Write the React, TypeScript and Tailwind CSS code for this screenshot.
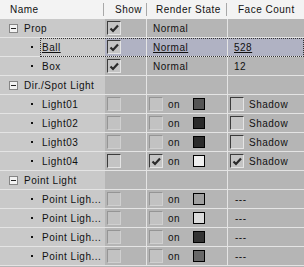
import React from 'react'

type Light = {
  name: string
  show: 'off' | 'disabled' | 'on'
  on: boolean
  onEnabled: boolean
  color: string
  shadow?: boolean
}

const font = { fontFamily: '"Liberation Sans", Arial, sans-serif' }

function CheckBox({ checked, enabled }: { checked?: boolean; enabled?: boolean }) {
  const edge = enabled
    ? 'border-t-[#3c3c3c] border-l-[#3c3c3c] border-b-[#e4e4e4] border-r-[#e4e4e4] bg-[#c4c4c4]'
    : 'border-t-[#959595] border-l-[#959595] border-b-[#d0d0d0] border-r-[#d0d0d0] bg-[#c2c2c2]'
  return (
    <div className={`w-[14px] h-[14px] border ${edge} flex items-center justify-center shrink-0`}>
      {checked && (
        <svg width="10" height="9" viewBox="0 0 10 9">
          <path d="M1.5 4.5 L4 7 L9 1.5" fill="none" stroke="#2a2a2a" strokeWidth="2.2" />
        </svg>
      )}
    </div>
  )
}

function Swatch({ color }: { color: string }) {
  return <div className="w-[12px] h-[12px] border border-black shrink-0" style={{ backgroundColor: color }} />
}

function Row({
  name,
  level,
  selected,
  show,
  render,
  face,
}: {
  name: string
  level: 0 | 1
  selected?: boolean
  show?: React.ReactNode
  render?: React.ReactNode
  face?: React.ReactNode
}) {
  const data = selected ? 'bg-[#b0b2c3]' : 'bg-[#b5b5b5]'
  return (
    <div className="relative flex h-[19px] border-b border-[#e4e4e4] text-[10px] tracking-[0.5px] text-[#111]">
      <div className="w-[105px] bg-[#c9c9c9] flex items-center">
        {level === 0 ? (
          <>
            <div className="ml-[9px] w-[9px] h-[9px] border border-[#858585] bg-[#f2f2f2] flex items-center justify-center">
              <div className="w-[5px] h-[1px] bg-[#222]" />
            </div>
            <span className="ml-[6px]">{name}</span>
          </>
        ) : (
          <>
            <div className="ml-[31px] w-[2px] h-[2px] bg-[#111]" />
            <span className={`ml-[9px] ${selected ? 'underline' : ''}`}>{name}</span>
          </>
        )}
      </div>
      <div className={`w-[42px] ${data} border-r border-[#e4e4e4] flex items-center pl-[2px]`}>{show}</div>
      <div className={`w-[81px] ${data} border-r border-[#e4e4e4] flex items-center`}>{render}</div>
      <div className={`flex-1 ${data} flex items-center`}>{face}</div>
      {selected && <div className="absolute left-[40px] top-0 right-0 bottom-[-1px] border border-dotted border-[#333]" />}
    </div>
  )
}

function LightRender({ l }: { l: Light }) {
  return (
    <div className="flex items-center pl-[2px]">
      <CheckBox checked={l.on} enabled={l.onEnabled} />
      <span className="ml-[5px] w-[25px]">on</span>
      <Swatch color={l.color} />
    </div>
  )
}

export default function App() {
  const spots: Light[] = [
    { name: 'Light01', show: 'disabled', on: false, onEnabled: false, color: '#555555', shadow: false },
    { name: 'Light02', show: 'disabled', on: false, onEnabled: false, color: '#2a2a2a', shadow: false },
    { name: 'Light03', show: 'disabled', on: false, onEnabled: false, color: '#2b2b2b', shadow: false },
    { name: 'Light04', show: 'off', on: true, onEnabled: true, color: '#f0f0f0', shadow: true },
  ]
  const points: Light[] = [
    { name: 'Point Ligh...', show: 'disabled', on: false, onEnabled: false, color: '#a0a0a0' },
    { name: 'Point Ligh...', show: 'disabled', on: false, onEnabled: false, color: '#dcdcdc' },
    { name: 'Point Ligh...', show: 'disabled', on: false, onEnabled: false, color: '#333333' },
    { name: 'Point Ligh...', show: 'disabled', on: false, onEnabled: false, color: '#686868' },
  ]

  return (
    <div className="w-[304px] h-[267px] bg-[#b5b5b5] overflow-hidden" style={font}>
      <div className="flex h-[19px] bg-[#f3f3f3] text-[10px] tracking-[0.5px] text-[#111] items-center">
        <div className="w-[103px] pl-[10px]">Name</div>
        <div className="w-px h-[13px] bg-[#a8a8a8]" />
        <div className="w-[42px] pl-[11px]">Show</div>
        <div className="w-px h-[13px] bg-[#a8a8a8]" />
        <div className="w-[79px] pl-[9px]">Render State</div>
        <div className="w-px h-[13px] bg-[#a8a8a8]" />
        <div className="flex-1 pl-[11px]">Face Count</div>
      </div>

      <Row name="Prop" level={0} show={<CheckBox checked enabled />} render={<span className="pl-[6px]">Normal</span>} />
      <Row
        name="Ball"
        level={1}
        selected
        show={<CheckBox checked enabled />}
        render={<span className="pl-[6px] underline">Normal</span>}
        face={<span className="pl-[6px] underline">528</span>}
      />
      <Row
        name="Box"
        level={1}
        show={<CheckBox checked enabled />}
        render={<span className="pl-[6px]">Normal</span>}
        face={<span className="pl-[6px]">12</span>}
      />

      <Row name="Dir./Spot Light" level={0} />
      {spots.map((l) => (
        <Row
          key={l.name}
          name={l.name}
          level={1}
          show={<CheckBox enabled={l.show === 'off'} />}
          render={<LightRender l={l} />}
          face={
            <div className="flex items-center pl-[2px]">
              <CheckBox checked={l.shadow} enabled />
              <span className="ml-[5px]">Shadow</span>
            </div>
          }
        />
      ))}

      <Row name="Point Light" level={0} />
      {points.map((l, i) => (
        <Row
          key={i}
          name={l.name}
          level={1}
          show={<CheckBox />}
          render={<LightRender l={l} />}
          face={<span className="pl-[7px]">---</span>}
        />
      ))}
    </div>
  )
}
